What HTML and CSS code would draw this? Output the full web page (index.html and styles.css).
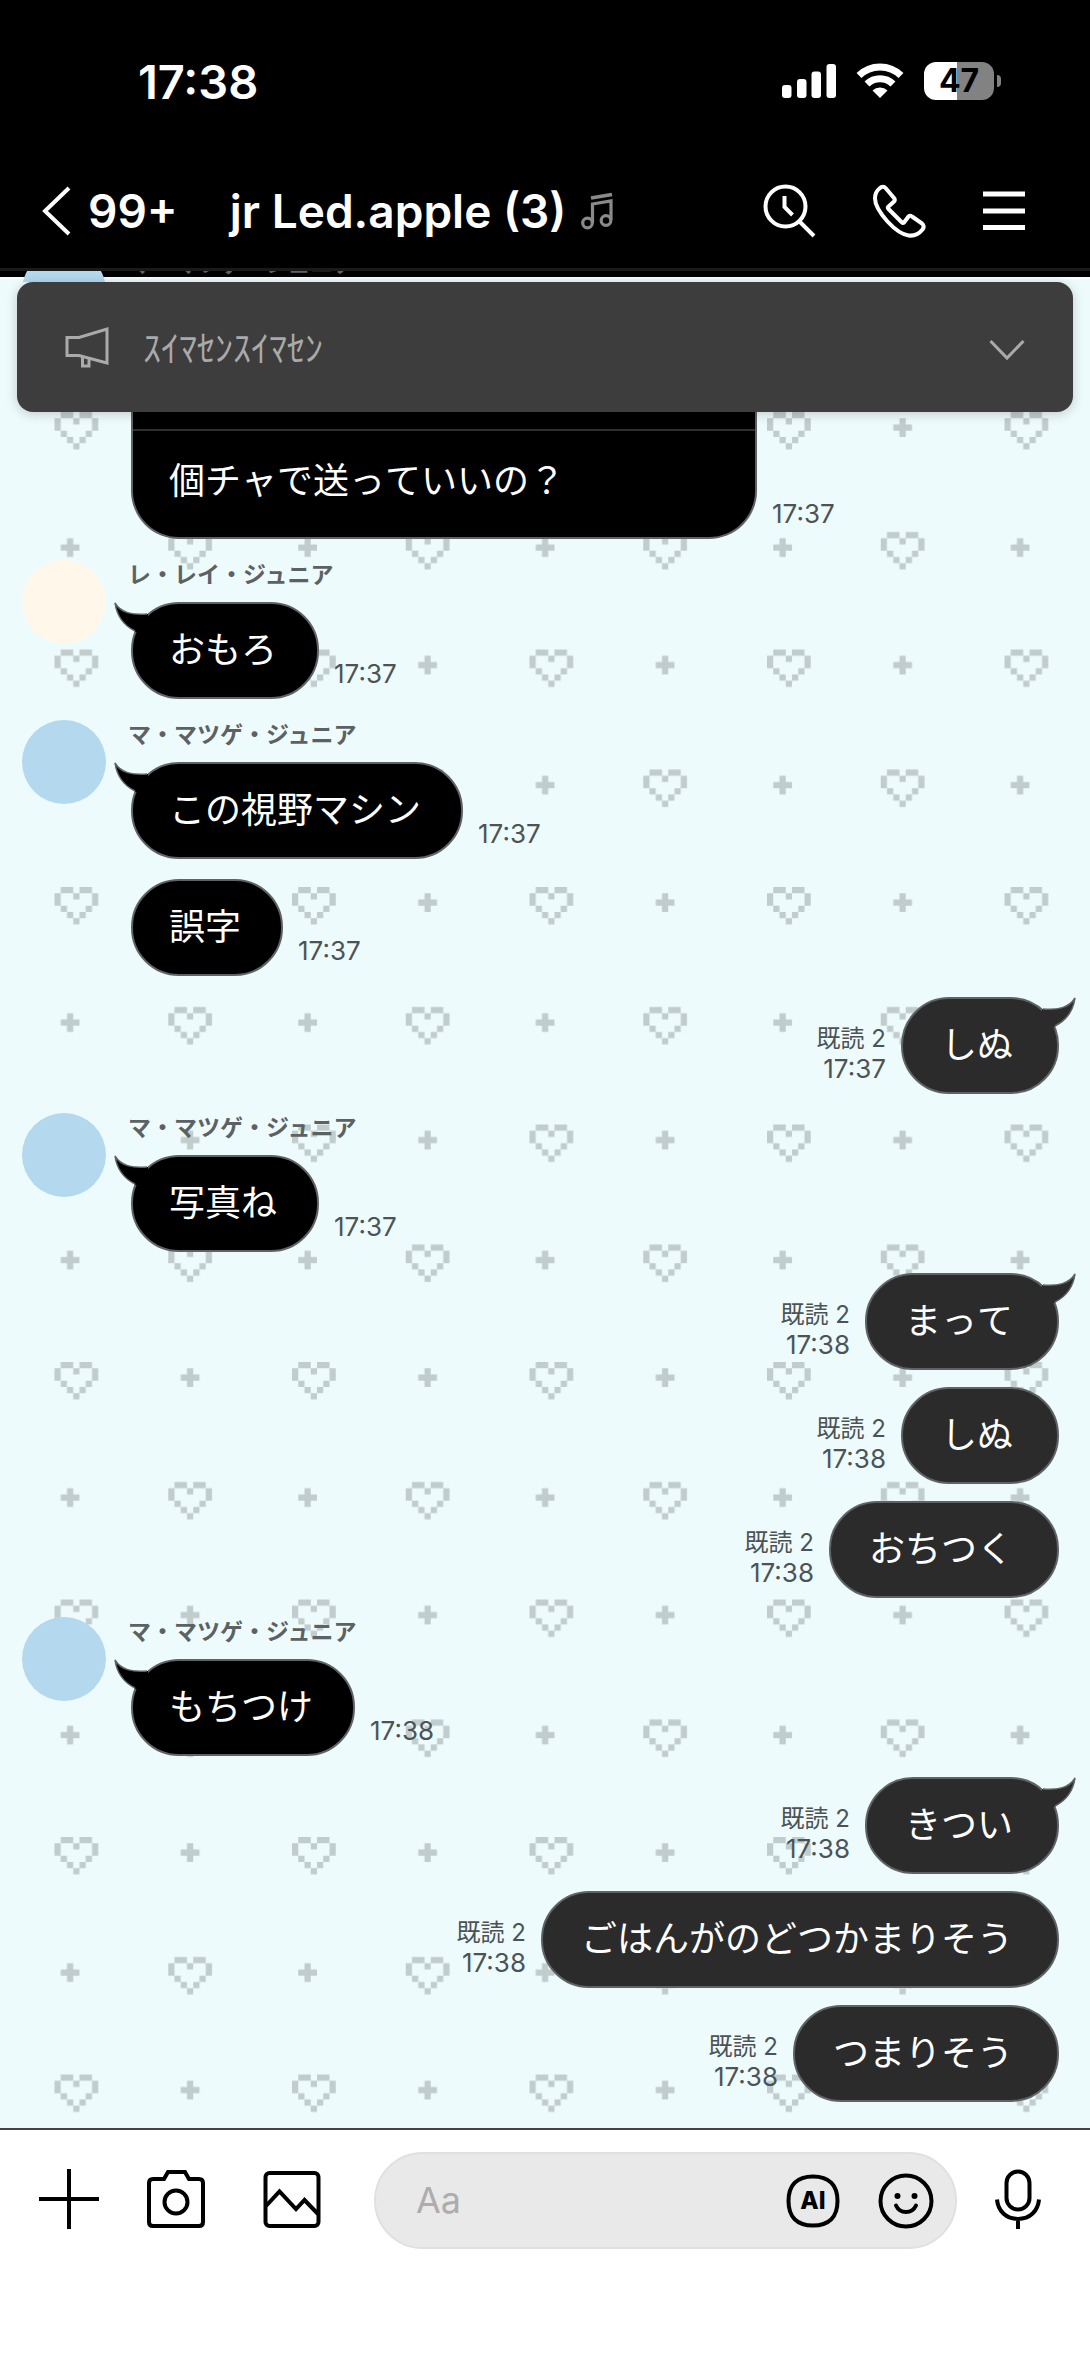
FILE: index.html
```html
<!DOCTYPE html>
<html lang="ja">
<head>
<meta charset="utf-8">
<meta name="viewport" content="width=device-width, initial-scale=1">
<title>jr Led.apple (3)</title>
<link rel="stylesheet" href="styles.css">
</head>
<body>
<header class="top">
  <div class="status">
    <time class="clock">17:38</time>
    <div class="indicators">
      <svg width="54" height="34" viewBox="0 0 54 34" fill="#fff" aria-hidden="true"><rect y="21" width="9.5" height="13" rx="3"/><rect x="15" y="15" width="9.5" height="19" rx="3"/><rect x="29.500" y="7.500" width="9.500" height="26.500" rx="3"/><rect x="44.500" width="9.500" height="34" rx="3"/></svg>
      <svg width="48" height="36" viewBox="0 0 48 36" fill="none" stroke="#fff" stroke-width="7" aria-hidden="true"><path d="M3 12.500A30 30 0 0 1 45 12.500"/><path d="M11 21A18.500 18.500 0 0 1 37 21"/><path d="M24 35L16.500 27.500A11 11 0 0 1 31.500 27.500Z" fill="#fff" stroke="none"/></svg>
      <div class="battery"><span class="battery-body">47</span><span class="battery-cap"></span></div>
    </div>
  </div>
  <div class="nav">
    <button class="back" type="button" aria-label="99+">
      <svg width="30" height="50" viewBox="0 0 30 50" fill="none" stroke="#fff" stroke-width="4" aria-hidden="true"><path d="M27 2L3 25L27 48"/></svg>
      <span>99+</span>
    </button>
    <h1 class="title">jr Led.apple (3)</h1>
    <svg class="note" width="34" height="38" viewBox="0 0 34 38" fill="none" stroke="#8a8a8a" stroke-width="3.200" aria-hidden="true"><path d="M11.500 31V12L30 9V28"/><path d="M10 6L31 2.500" stroke-width="3.600"/><circle cx="6.500" cy="31" r="4.800"/><circle cx="25" cy="28.500" r="4.800"/></svg>
    <div class="actions">
      <button type="button" aria-label="検索"><svg width="54" height="54" viewBox="0 0 54 54" fill="none" stroke="#fff" stroke-width="4" aria-hidden="true"><circle cx="22.500" cy="22.500" r="20"/><path d="M21.500 12V23L29.500 31M36 37L51 52"/></svg></button>
      <button type="button" aria-label="通話"><svg width="54" height="54" viewBox="0 0 54 54" fill="none" stroke="#fff" stroke-width="4" stroke-linejoin="round" aria-hidden="true"><path d="M6.500 4.500Q10 1 13 4.500L21 14Q22.500 16 21 17.500L15 23Q14.500 24 15.500 25L29 38.500Q30 39.500 31 38.500L35.500 32.500Q37 31 39 32.500L49 39.500Q52 42 49.500 45.500Q44 52.500 35.500 51.500Q26 50 14.500 37.500Q2 23.500 2 14.500Q2 8 6.500 4.500Z"/></svg></button>
      <button type="button" aria-label="メニュー"><svg width="42" height="40" viewBox="0 0 42 40" stroke="#fff" stroke-width="5" aria-hidden="true"><path d="M0 3H42M0 20H42M0 36.500H42"/></svg></button>
    </div>
  </div>
</header>
<main class="chat">
  <svg class="wallpaper" aria-hidden="true">
    <defs>
      <pattern id="hearts" width="38" height="38" patternUnits="userSpaceOnUse" patternTransform="translate(54.500 141) scale(6.250)">
        <g fill="#c1cccd">
          <path id="heart" d="M1 0h2v1h-2zM4 0h2v1h-2zM0 1h1v2h-1zM3 1h1v1h-1zM6 1h1v2h-1zM1 3h1v1h-1zM5 3h1v1h-1zM2 4h1v1h-1zM4 4h1v1h-1zM3 5h1v1h-1z"/>
          <path id="plus" d="M21.200 1h1v1h1v1h-1v1h-1v-1h-1v-1h1z"/>
          <use href="#heart" x="18.200" y="19.200"/>
          <use href="#plus" x="-19.200" y="19.200"/>
        </g>
      </pattern>
    </defs>
    <rect width="100%" height="100%" fill="url(#hearts)"/>
  </svg>
  <div class="peek"><span class="avatar blue"></span><span class="name">マ・マツゲ・ジュニア</span></div>
  <button class="notice" type="button">
    <svg width="44" height="42" viewBox="0 0 44 42" fill="none" stroke="#aaa" stroke-width="3" aria-hidden="true"><path d="M2 11.500H14L42 3V37L14 29.500H2ZM17.500 30.500V40H24V32.500"/></svg>
    <span class="notice-text">ｽｲﾏｾﾝｽｲﾏｾﾝ</span>
    <svg class="expand" width="36" height="22" viewBox="0 0 36 22" fill="none" stroke="#aaa" stroke-width="3" aria-hidden="true"><path d="M1.500 2L18 19L34.500 2"/></svg>
  </button>
  <section class="group received quoted">
    <div class="row"><div class="bubble reply"><div class="quote"></div><p>個チャで送っていいの？</p></div><div class="meta"><time>17:37</time></div></div>
  </section>
  <section class="group received">
    <span class="avatar cream"></span>
    <span class="name">レ・レイ・ジュニア</span>
    <div class="row"><p class="bubble tail">おもろ<svg class="tip" viewBox="0 0 34 30" aria-hidden="true"><path d="M1 1C7 11 18 13 34 12V30H22C11 24 3 15 1 1Z" fill="#000"/><path d="M21 29C11 24 3 15 1 1C7 11 18 13 33 12" fill="none" stroke="#5f6365" stroke-width="1.500"/></svg></p><div class="meta"><time>17:37</time></div></div>
  </section>
  <section class="group received">
    <span class="avatar blue"></span>
    <span class="name">マ・マツゲ・ジュニア</span>
    <div class="row"><p class="bubble tail">この視野マシン<svg class="tip" viewBox="0 0 34 30" aria-hidden="true"><path d="M1 1C7 11 18 13 34 12V30H22C11 24 3 15 1 1Z" fill="#000"/><path d="M21 29C11 24 3 15 1 1C7 11 18 13 33 12" fill="none" stroke="#5f6365" stroke-width="1.500"/></svg></p><div class="meta"><time>17:37</time></div></div>
    <div class="row"><p class="bubble">誤字</p><div class="meta"><time>17:37</time></div></div>
  </section>
  <section class="group sent">
    <div class="row"><div class="meta"><span>既読 2</span><time>17:37</time></div><p class="bubble tail">しぬ<svg class="tip" viewBox="0 0 34 30" aria-hidden="true"><path d="M33 1C27 11 16 13 0 12V30H12C23 24 31 15 33 1Z" fill="#2b2b2b"/><path d="M13 29C23 24 31 15 33 1C27 11 16 13 1 12" fill="none" stroke="#5f6365" stroke-width="1.500"/></svg></p></div>
  </section>
  <section class="group received">
    <span class="avatar blue"></span>
    <span class="name">マ・マツゲ・ジュニア</span>
    <div class="row"><p class="bubble tail">写真ね<svg class="tip" viewBox="0 0 34 30" aria-hidden="true"><path d="M1 1C7 11 18 13 34 12V30H22C11 24 3 15 1 1Z" fill="#000"/><path d="M21 29C11 24 3 15 1 1C7 11 18 13 33 12" fill="none" stroke="#5f6365" stroke-width="1.500"/></svg></p><div class="meta"><time>17:37</time></div></div>
  </section>
  <section class="group sent">
    <div class="row"><div class="meta"><span>既読 2</span><time>17:38</time></div><p class="bubble tail">まって<svg class="tip" viewBox="0 0 34 30" aria-hidden="true"><path d="M33 1C27 11 16 13 0 12V30H12C23 24 31 15 33 1Z" fill="#2b2b2b"/><path d="M13 29C23 24 31 15 33 1C27 11 16 13 1 12" fill="none" stroke="#5f6365" stroke-width="1.500"/></svg></p></div>
    <div class="row"><div class="meta"><span>既読 2</span><time>17:38</time></div><p class="bubble">しぬ</p></div>
    <div class="row"><div class="meta"><span>既読 2</span><time>17:38</time></div><p class="bubble">おちつく</p></div>
  </section>
  <section class="group received">
    <span class="avatar blue"></span>
    <span class="name">マ・マツゲ・ジュニア</span>
    <div class="row"><p class="bubble tail">もちつけ<svg class="tip" viewBox="0 0 34 30" aria-hidden="true"><path d="M1 1C7 11 18 13 34 12V30H22C11 24 3 15 1 1Z" fill="#000"/><path d="M21 29C11 24 3 15 1 1C7 11 18 13 33 12" fill="none" stroke="#5f6365" stroke-width="1.500"/></svg></p><div class="meta"><time>17:38</time></div></div>
  </section>
  <section class="group sent">
    <div class="row"><div class="meta"><span>既読 2</span><time>17:38</time></div><p class="bubble tail">きつい<svg class="tip" viewBox="0 0 34 30" aria-hidden="true"><path d="M33 1C27 11 16 13 0 12V30H12C23 24 31 15 33 1Z" fill="#2b2b2b"/><path d="M13 29C23 24 31 15 33 1C27 11 16 13 1 12" fill="none" stroke="#5f6365" stroke-width="1.500"/></svg></p></div>
    <div class="row"><div class="meta"><span>既読 2</span><time>17:38</time></div><p class="bubble">ごはんがのどつかまりそう</p></div>
    <div class="row"><div class="meta"><span>既読 2</span><time>17:38</time></div><p class="bubble">つまりそう</p></div>
  </section>
</main>
<footer class="composer">
  <button type="button" aria-label="追加"><svg width="60" height="60" viewBox="0 0 60 60" stroke="#000" stroke-width="4" aria-hidden="true"><path d="M0 30H60M30 0V60"/></svg></button>
  <button type="button" aria-label="カメラ"><svg width="60" height="60" viewBox="0 0 60 60" fill="none" stroke="#000" stroke-width="4" aria-hidden="true"><path d="M7 10H18L22 3H39L43 10H53Q57 10 57 14V53Q57 57 53 57H7Q3 57 3 53V14Q3 10 7 10Z"/><circle cx="30" cy="33" r="11.500"/></svg></button>
  <button type="button" aria-label="写真"><svg width="60" height="60" viewBox="0 0 60 60" fill="none" stroke="#000" stroke-width="4" aria-hidden="true"><rect x="3.500" y="4" width="53" height="53" rx="4"/><path d="M4 37L17.500 22.500L34 40L42.500 31L56 45"/></svg></button>
  <div class="field">
    <input type="text" placeholder="Aa" aria-label="メッセージ">
    <button class="ai" type="button" aria-label="AI"><svg width="54" height="54" viewBox="0 0 54 54" fill="none" stroke="#000" stroke-width="4" aria-hidden="true"><path d="M27 2.500C43 2.500 51.500 11 51.500 27S43 51.500 27 51.500S2.500 43 2.500 27S11 2.500 27 2.500Z"/></svg><span>AI</span></button>
    <button type="button" aria-label="スタンプ"><svg width="56" height="56" viewBox="0 0 56 56" fill="none" stroke="#000" stroke-width="4" aria-hidden="true"><circle cx="28" cy="28" r="25.500"/><path d="M18 32.500Q21 39 28 39T38 32.500" stroke-linecap="round"/><g fill="#000" stroke="none"><circle cx="19.500" cy="23" r="3"/><circle cx="36.500" cy="23" r="3"/></g></svg></button>
  </div>
  <button type="button" aria-label="音声"><svg width="46" height="60" viewBox="0 0 46 60" fill="none" stroke="#000" stroke-width="4" aria-hidden="true"><rect x="11.500" y="2.500" width="23" height="38" rx="11.500"/><path d="M2 30.500C3 42 11 50 23 50S43 42 44 30.500M23 50V60"/></svg></button>
</footer>
</body>
</html>
```
FILE: styles.css
```css
* { box-sizing: border-box; }
html { height: 100%; }
body {
  margin: 0;
  min-height: 100%;
  display: flex;
  flex-direction: column;
  background: #fff;
  font-family: Inter, "Noto Sans CJK JP", sans-serif;
}
p, h1 { margin: 0; }
button {
  display: flex;
  align-items: center;
  padding: 0;
  border: 0;
  background: none;
  color: inherit;
  font: inherit;
}
svg { flex: none; display: block; }

.top { background: #000; color: #fff; border-bottom: 3px solid #1a1a1a; }
.status {
  display: flex;
  justify-content: space-between;
  align-items: center;
  height: 162px;
  padding: 0 89px 0 138px;
}
.clock { font-size: 47px; font-weight: 600; }
.indicators { display: flex; align-items: center; gap: 20px; }
.battery { display: flex; align-items: center; gap: 3px; }
.battery-body {
  width: 70px;
  height: 38px;
  border-radius: 12px;
  background: linear-gradient(90deg, #fff 47%, #828282 47%);
  color: #000;
  font-size: 32px;
  font-weight: 700;
  line-height: 38px;
  text-align: center;
}
.battery-cap { width: 4px; height: 12px; border-radius: 0 4px 4px 0; background: #828282; }
.nav {
  display: flex;
  align-items: center;
  height: 106px;
  padding: 0 65px 8px 42px;
  font-size: 46px;
  font-weight: 600;
}
.back { gap: 16px; }
.title { margin-left: 52px; font-size: 46px; font-weight: 600; white-space: nowrap; }
.note { margin-left: 14px; }
.actions { display: flex; align-items: center; gap: 56px; margin-left: auto; }

.chat {
  position: relative;
  flex: 1;
  display: flex;
  flex-direction: column;
  padding-bottom: 26px;
  background: #eefbfd;
  overflow: hidden;
}
.wallpaper { position: absolute; inset: 0; width: 100%; height: 100%; }
.peek {
  position: relative;
  display: flex;
  align-items: flex-start;
  gap: 25px;
  height: 11px;
  padding-left: 22px;
  background: linear-gradient(#000 6px, #fff 6px, #eefbfd 9px);
  overflow: hidden;
}
.peek > * { margin-top: -22px; }
.avatar { flex: none; width: 84px; height: 84px; border-radius: 50%; }
.blue { background: #b4d8ee; }
.cream { background: #fff8ea; }
.name { margin-left: -3px; color: #5c6264; font-size: 23px; font-weight: 700; line-height: 30px; }
.notice {
  position: relative;
  z-index: 2;
  height: 130px;
  margin: 0 17px;
  padding: 0 48px;
  border-radius: 16px;
  background: #3d3d3d;
  box-shadow: 0 2px 12px rgba(0, 0, 0, .2);
  color: #aaa;
}
.notice-text { flex: 1; margin-left: 34px; padding-bottom: 2px; font-size: 36px; text-align: left; }
.expand { margin-top: 6px; }

.group {
  position: relative;
  display: grid;
  grid-template-columns: 84px 1fr;
  column-gap: 25px;
  padding: 0 31px 0 22px;
}
.group .row { grid-column: 2; }
.received { margin-bottom: 21px; }
.sent { margin-bottom: 19px; row-gap: 17px; }
.sent:last-child { margin-bottom: 0; }
.group .avatar { grid-row: 1; grid-column: 1; height: 84px; margin-bottom: -42px; }
.group .name { grid-row: 1; grid-column: 2; height: 42px; }
.row { display: flex; align-items: flex-end; gap: 15px; }
.row + .row { margin-top: 20px; }
.sent .row { justify-content: flex-end; }
.sent .row + .row { margin-top: 0; }
.bubble {
  position: relative;
  padding: 20px 40px 20px 36px;
  border: 2px solid #5f6365;
  border-radius: 48px;
  background: #000;
  color: #fff;
  font-size: 36px;
  line-height: 53px;
  font-kerning: none;
}
.sent .bubble { padding: 20px 44px 20px 38px; background: #2b2b2b; }
.tip { position: absolute; top: -2px; width: 34px; height: 30px; }
.received .tip { left: -19px; }
.sent .tip { right: -19px; }
.reply { width: 626px; padding: 0; border-top: 0; border-radius: 0 0 48px 48px; }
.reply p { padding: 24px 36px 29px; }
.quote { height: 19px; border-bottom: 2px solid #2e2e2e; }
.meta {
  display: flex;
  flex-direction: column;
  align-items: flex-end;
  padding-bottom: 10px;
  color: #4d5355;
  font-size: 24px;
  line-height: 30px;
}
.meta time { font-size: 26px; }

.composer {
  display: flex;
  align-items: flex-start;
  height: 236px;
  padding: 22px 49px 0 39px;
  border-top: 2px solid #444;
}
.composer > button { height: 97px; padding-bottom: 4px; margin-right: 47px; }
.composer > button:nth-of-type(2) { margin-right: 56px; }
.composer > button:nth-of-type(3) { margin-right: 52px; }
.composer > button:last-child { margin: 0 0 0 38px; }
.field {
  flex: 1;
  display: flex;
  align-items: center;
  gap: 38px;
  min-width: 0;
  height: 97px;
  padding: 0 21px 0 40px;
  border: 2px solid #e0e0e0;
  border-radius: 49px;
  background: #e9e9e9;
}
.field input {
  flex: 1;
  min-width: 0;
  padding: 0 0 2px;
  border: 0;
  outline: 0;
  background: none;
  color: #000;
  font: 36px Inter, "Noto Sans CJK JP", sans-serif;
}
.field input::placeholder { color: #adadad; opacity: 1; }
.ai { display: grid; }
.ai svg, .ai span { grid-area: 1 / 1; }
.ai span { font-size: 24px; font-weight: 800; text-align: center; }
```
